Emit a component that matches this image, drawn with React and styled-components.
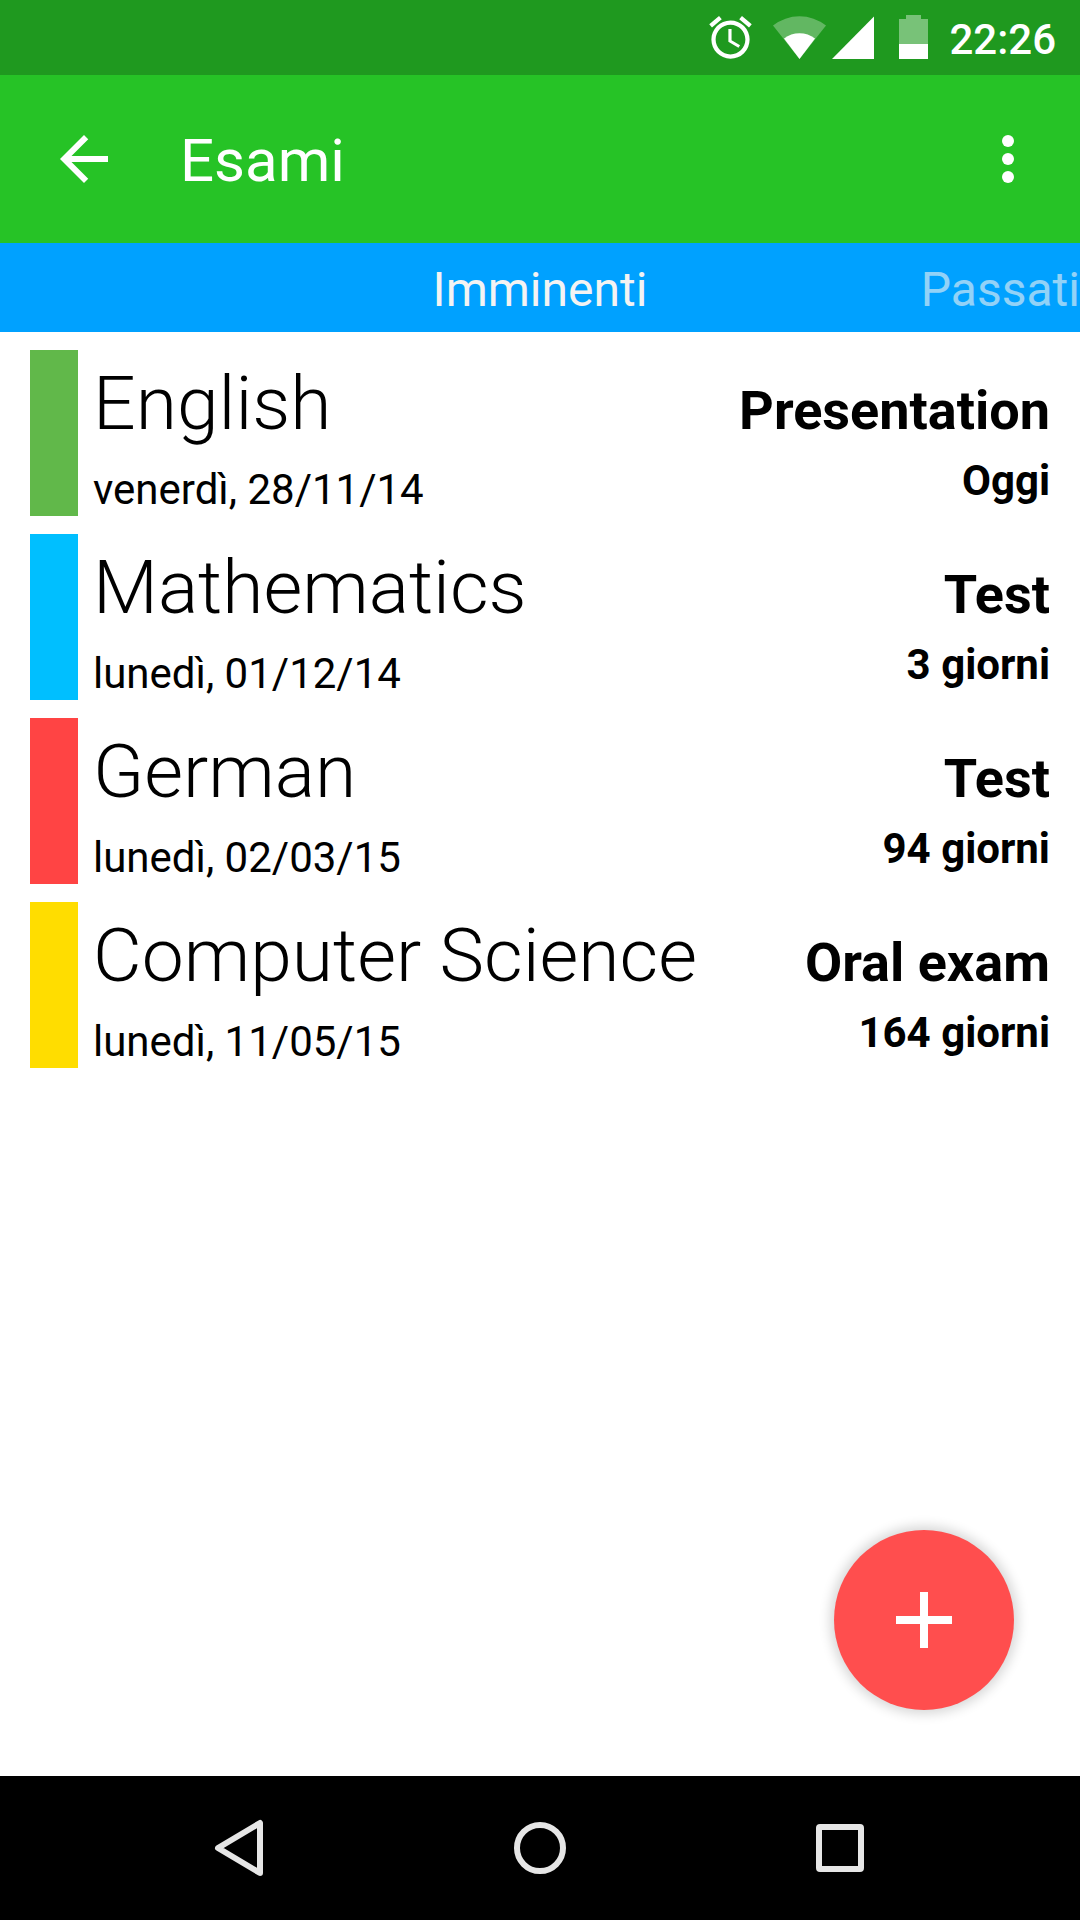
import React from "react";
import styled, { createGlobalStyle } from "styled-components";

const GlobalStyle = createGlobalStyle`
  *, *::before, *::after { box-sizing: border-box; }
  body {
    margin: 0;
    background: #ffffff;
    color: #000000;
    font-family: Roboto, "Noto Sans", sans-serif;
  }
  button {
    margin: 0;
    padding: 0;
    border: 0;
    background: none;
    color: inherit;
    font: inherit;
    cursor: pointer;
  }
  svg { display: block; }
`;

const Screen = styled.div`
  display: flex;
  flex-direction: column;
  min-height: 100vh;
  overflow-x: hidden;
`;

const StatusBar = styled.div`
  display: flex;
  align-items: center;
  justify-content: flex-end;
  height: 75px;
  padding-right: 24px;
  background: #1f991f;
  color: #ffffff;
`;

const StatusIcon = styled.svg`
  height: 45px;
  margin-right: ${(p) => p.$gap}px;
  fill: currentColor;
`;

const Clock = styled.time`
  padding-top: 4px;
  font-size: 42px;
  font-weight: 500;
  line-height: 50px;
`;

const AppBar = styled.header`
  display: flex;
  align-items: center;
  height: 168px;
  padding: 0 36px 0 48px;
  background: #26c326;
  color: #ffffff;
`;

const IconButton = styled.button`
  flex: none;
  svg {
    width: 72px;
    height: 72px;
    fill: currentColor;
  }
`;

const Title = styled.h1`
  flex: 1;
  margin: 0;
  padding: 4px 0 0 60px;
  font-size: 60px;
  font-weight: 400;
  line-height: 72px;
`;

const Tabs = styled.nav`
  display: grid;
  grid-template-columns: 1fr auto 1fr;
  align-items: center;
  height: 89px;
  padding-top: 4px;
  background: #00a1ff;
  color: #f3f3f3;
`;

const Tab = styled.button`
  grid-column: ${(p) => p.$column};
  justify-self: ${(p) => (p.$active ? "center" : "end")};
  opacity: ${(p) => (p.$active ? 1 : 0.6)};
  font-size: 48px;
  line-height: 56px;
`;

const Content = styled.main`
  position: relative;
  flex: 1;
`;

const ExamList = styled.ul`
  display: flex;
  flex-direction: column;
  gap: 18px;
  margin: 0;
  padding: 18px 30px;
  list-style: none;
`;

const ExamRow = styled.li`
  display: flex;
  min-height: 166px;
`;

const Swatch = styled.span`
  flex: none;
  width: 48px;
  background: ${(p) => p.$color};
`;

const Subject = styled.div`
  display: flex;
  flex: 1;
  flex-direction: column;
  gap: 18px;
  padding: 9px 0 0 15px;
`;

const Name = styled.h2`
  margin: 0;
  font-size: 75px;
  font-weight: 300;
  line-height: 88px;
`;

const DateLabel = styled.time`
  font-size: 42px;
  line-height: 50px;
`;

const Details = styled.div`
  display: flex;
  flex-direction: column;
  gap: 14px;
  padding-top: 29px;
  font-weight: 700;
  text-align: right;
`;

const Kind = styled.span`
  font-size: 54px;
  line-height: 63px;
`;

const Remaining = styled.span`
  font-size: 42px;
  line-height: 50px;
`;

const AddButton = styled.button`
  position: absolute;
  right: 66px;
  bottom: 66px;
  display: grid;
  place-items: center;
  width: 180px;
  height: 180px;
  border-radius: 50%;
  background: #ff4e4e;
  box-shadow: 0 0 12px 4px rgba(0, 0, 0, 0.16);
`;

const NavBar = styled.footer`
  display: flex;
  justify-content: center;
  gap: 228px;
  padding: 36px 0;
  background: #000000;
  color: #e6e6e6;
  svg {
    fill: none;
    stroke: currentColor;
    stroke-width: 6;
    stroke-linejoin: round;
  }
`;

const exams = [
  { name: "English", date: "venerdì, 28/11/14", iso: "2014-11-28", kind: "Presentation", remaining: "Oggi", color: "#61b84a" },
  { name: "Mathematics", date: "lunedì, 01/12/14", iso: "2014-12-01", kind: "Test", remaining: "3 giorni", color: "#00bfff" },
  { name: "German", date: "lunedì, 02/03/15", iso: "2015-03-02", kind: "Test", remaining: "94 giorni", color: "#ff4444" },
  { name: "Computer Science", date: "lunedì, 11/05/15", iso: "2015-05-11", kind: "Oral exam", remaining: "164 giorni", color: "#ffdd00" },
];

export default function App() {
  return (
    <Screen>
      <GlobalStyle />
      <StatusBar>
        <StatusIcon $gap={20} width="45" viewBox="1.41 1.41 21.18 21.18" aria-hidden="true">
          <path d="M22 5.72l-4.6-3.86-1.29 1.53 4.6 3.86L22 5.72zM7.88 3.39L6.6 1.86 2 5.71l1.29 1.53 4.59-3.85zM12.5 8H11v6l4.75 2.85.75-1.23-4-2.37V8zM12 4c-4.97 0-9 4.03-9 9s4.02 9 9 9a9 9 0 0 0 0-18zm0 16c-3.87 0-7-3.13-7-7s3.13-7 7-7 7 3.13 7 7-3.13 7-7 7z" />
        </StatusIcon>
        <StatusIcon $gap={6} width="53" viewBox="0 0 53 45" aria-hidden="true">
          <path opacity=".3" d="M26.5 44L0 10.5A43 43 0 0 1 53 10.5z" />
          <path d="M26.5 44L11 23.5A26 26 0 0 1 42 23.5z" />
        </StatusIcon>
        <StatusIcon $gap={25} width="42" viewBox="0 0 42 45" aria-hidden="true">
          <path d="M0 44L42 1.5V44z" />
        </StatusIcon>
        <StatusIcon $gap={21} width="29" viewBox="0 0 29 45" aria-hidden="true">
          <path opacity=".4" d="M0 4h7V0h15v4h7v25H0z" />
          <path d="M0 29h29v15H0z" />
        </StatusIcon>
        <Clock>22:26</Clock>
      </StatusBar>

      <AppBar>
        <IconButton type="button" aria-label="Indietro">
          <svg viewBox="0 0 24 24">
            <path d="M20 11H7.83l5.59-5.59L12 4l-8 8 8 8 1.41-1.41L7.83 13H20v-2z" />
          </svg>
        </IconButton>
        <Title>Esami</Title>
        <IconButton type="button" aria-label="Altre opzioni">
          <svg viewBox="0 0 24 24">
            <circle cx="12" cy="6" r="2" />
            <circle cx="12" cy="12" r="2" />
            <circle cx="12" cy="18" r="2" />
          </svg>
        </IconButton>
      </AppBar>

      <Tabs>
        <Tab type="button" $column={2} $active>Imminenti</Tab>
        <Tab type="button" $column={3}>Passati</Tab>
      </Tabs>

      <Content>
        <ExamList>
          {exams.map((exam) => (
            <ExamRow key={exam.name}>
              <Swatch $color={exam.color} />
              <Subject>
                <Name>{exam.name}</Name>
                <DateLabel dateTime={exam.iso}>{exam.date}</DateLabel>
              </Subject>
              <Details>
                <Kind>{exam.kind}</Kind>
                <Remaining>{exam.remaining}</Remaining>
              </Details>
            </ExamRow>
          ))}
        </ExamList>
        <AddButton type="button" aria-label="Aggiungi esame">
          <svg width="56" height="56" viewBox="0 0 56 56" fill="#ffffff">
            <path d="M24 0h8v24h24v8H32v24h-8V32H0v-8h24z" />
          </svg>
        </AddButton>
      </Content>

      <NavBar>
        <IconButton type="button" aria-label="Indietro di sistema">
          <svg viewBox="0 0 72 72">
            <path d="M14 36L56 11V61z" />
          </svg>
        </IconButton>
        <IconButton type="button" aria-label="Schermata principale">
          <svg viewBox="0 0 72 72">
            <circle cx="36" cy="36" r="23" />
          </svg>
        </IconButton>
        <IconButton type="button" aria-label="App recenti">
          <svg viewBox="0 0 72 72">
            <rect x="15" y="15" width="42" height="42" rx="1" />
          </svg>
        </IconButton>
      </NavBar>
    </Screen>
  );
}
